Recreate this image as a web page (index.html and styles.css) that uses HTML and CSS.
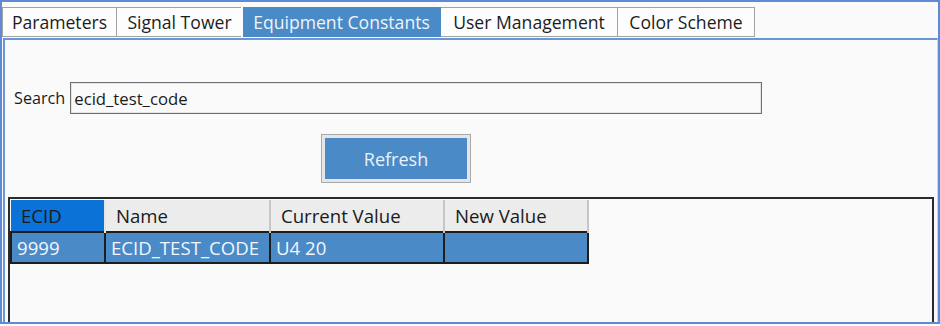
FILE: index.html
```html
<!DOCTYPE html>
<html>
<head>
<meta charset="utf-8">
<link rel="stylesheet" href="styles.css">
</head>
<body>
<div class="window">
  <div class="tabs">
    <div class="tab t1">Parameters</div>
    <div class="tab t2">Signal Tower</div>
    <div class="tab t3 active">Equipment Constants</div>
    <div class="tab t4">User Management</div>
    <div class="tab t5">Color Scheme</div>
  </div>
  <div class="panel">
    <div class="search-row">
      <span class="search-label">Search</span>
      <div class="search-input">ecid_test_code</div>
    </div>
    <div class="btn-outer"><div class="btn">Refresh</div></div>
    <div class="grid">
      <table>
        <thead>
          <tr>
            <th class="c1 sel">ECID</th>
            <th class="c2">Name</th>
            <th class="c3">Current Value</th>
            <th class="c4">New Value</th>
          </tr>
        </thead>
        <tbody>
          <tr>
            <td>9999</td>
            <td>ECID_TEST_CODE</td>
            <td>U4 20</td>
            <td></td>
          </tr>
        </tbody>
      </table>
    </div>
  </div>
</div>
</body>
</html>
```
FILE: styles.css
```css
* { box-sizing: border-box; }
html, body { margin: 0; padding: 0; }
body {
  width: 940px;
  height: 326px;
  background: #fafafa;
  font-family: "Open Sans", "Noto Sans", sans-serif;
  font-size: 17px;
  color: #1a1a1a;
  overflow: hidden;
}
.window {
  width: 940px;
  height: 324px;
  border: 2px solid #5f8bd6;
  display: flex;
  flex-direction: column;
  background: #fafafa;
}
.tabs {
  display: flex;
  padding-top: 5px;
  height: 36px;
  font-size: 17.6px;
}
.tab {
  height: 30px;
  border: 1px solid #a3a3a3;
  background: #fdfdfd;
  display: flex;
  align-items: center;
  justify-content: center;
  white-space: nowrap;
  color: #1c1c1c;
}
.tab + .tab { border-left: none; }
.t1 { width: 115px; }
.t2 { width: 126px; }
.t3 { width: 198px; }
.t4 { width: 177px; }
.t5 { width: 137px; }
.tab.active {
  background: #4a8ac6;
  border-color: #4a8ac6;
  color: #eef4fb;
  box-shadow: -2px 0 0 #fdfdfd;
}
.panel {
  flex: 1;
  margin-left: 1px;
  border-top: 2px solid #6a95d6;
  border-left: 2px solid #6a95d6;
  border-right: 1px solid #c9d6ea;
  display: flex;
  flex-direction: column;
  min-height: 0;
}
.search-row {
  display: flex;
  align-items: center;
  margin-top: 42px;
  padding-left: 9px;
  gap: 5px;
}
.search-label { color: #1a1a1a; font-size: 16.2px; }
.search-input {
  width: 692px;
  height: 32px;
  border: 1px solid #6f6f6f;
  box-shadow: inset 0 0 0 1px #e4e4e4;
  background: #fafafa;
  padding-left: 3px;
  display: flex;
  align-items: center;
  font-size: 16.7px;
}
.btn-outer {
  margin-top: 20px;
  margin-left: 316px;
  width: 150px;
  height: 49px;
  border: 1px solid #a9a9a9;
  background: #e6e6e6;
  padding: 3px;
}
.btn {
  width: 100%;
  height: 100%;
  background: #4a8ac6;
  color: #e9f1fa;
  display: flex;
  align-items: center;
  justify-content: center;
  font-size: 18px;
}
.grid {
  flex: 1;
  margin-top: 14px;
  margin-left: 3px;
  width: 926px;
  border: 2px solid #2b2b2b;
  border-bottom: none;
  padding-top: 1px;
}
table {
  border-collapse: collapse;
  table-layout: fixed;
  font-size: 18.6px;
}
th {
  height: 32px;
  background: #ececec;
  font-weight: normal;
  text-align: left;
  padding: 0 0 0 10px;
  border-right: 2px solid #c6c6c6;
  border-bottom: 1px solid #d6d6d6;
  color: #1a1a1a;
  white-space: nowrap;
}
th.sel {
  background: #0b72d8;
  border-right-color: #e4e4e4;
}
.c1 { width: 94px; }
.c2 { width: 165px; }
.c3 { width: 174px; }
.c4 { width: 144px; }
td {
  height: 31px;
  background: #4a8ac6;
  color: #f2f6fb;
  border: 2px solid #1d1d1d;
  padding: 0 0 0 5px;
  white-space: nowrap;
}
```
